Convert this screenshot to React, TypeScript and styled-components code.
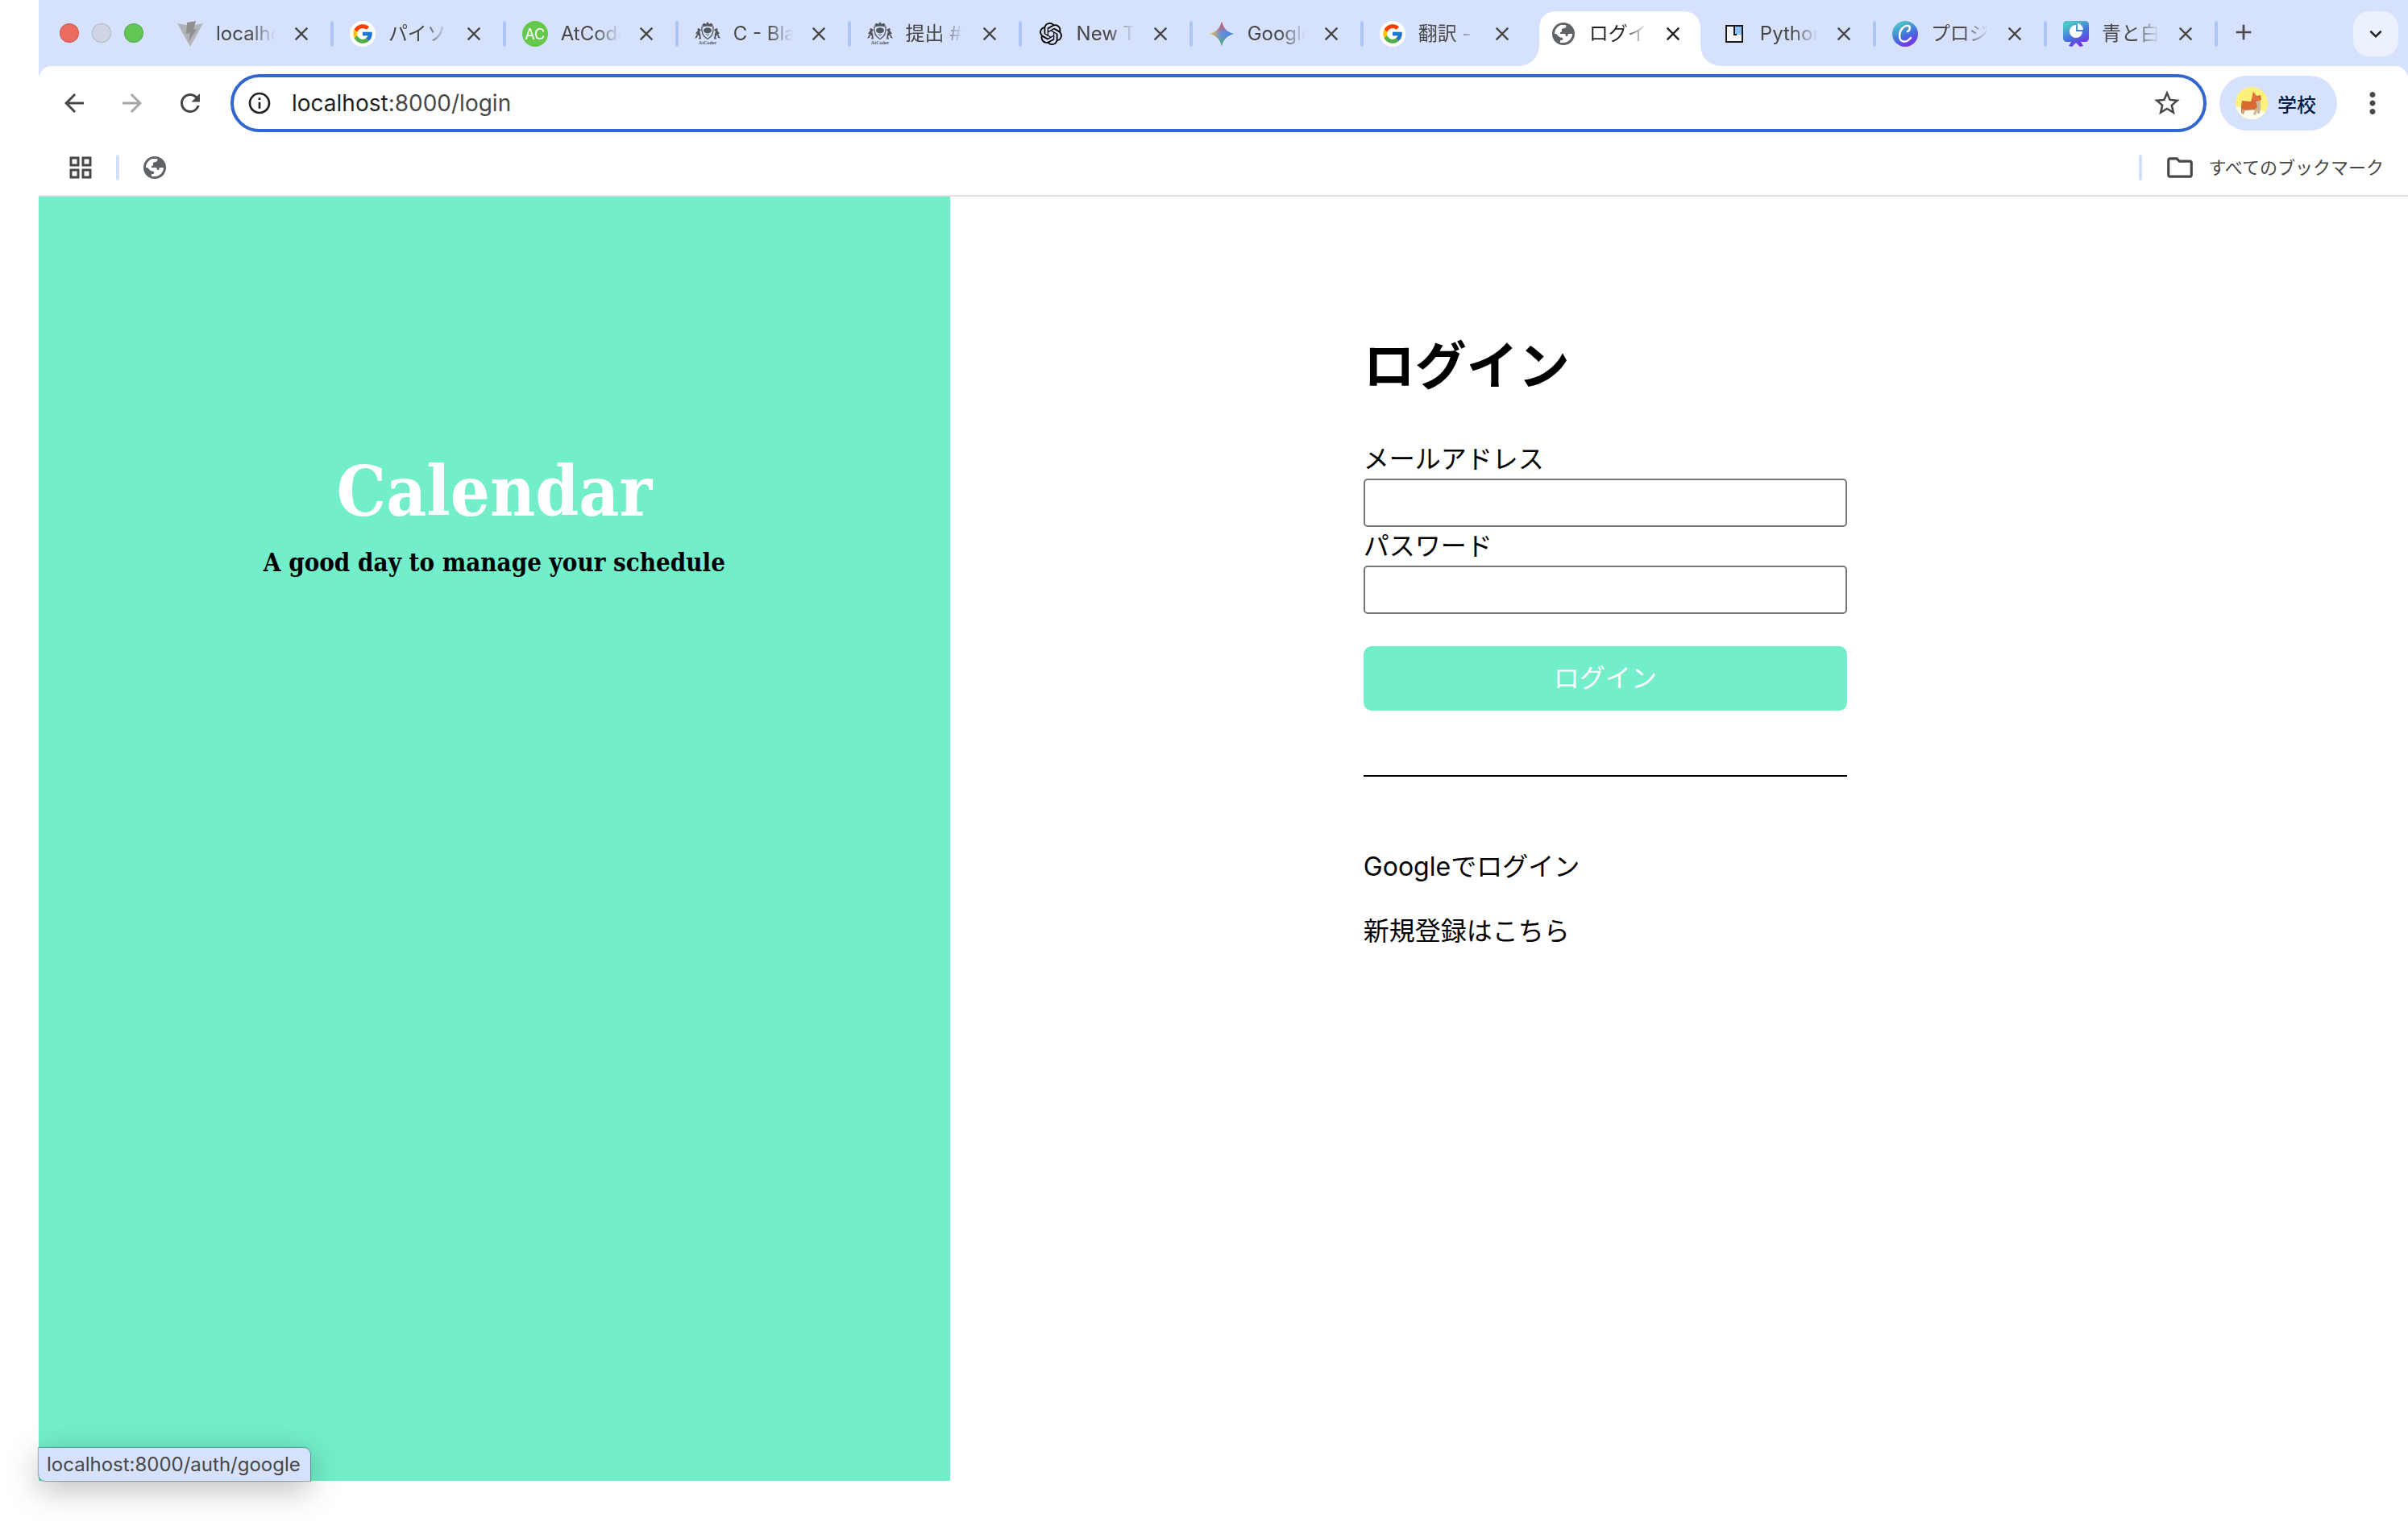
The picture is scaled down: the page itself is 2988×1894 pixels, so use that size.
import React from 'react';
import styled, { createGlobalStyle, css } from 'styled-components';
import { MdArrowBack, MdArrowForward, MdRefresh, MdClose, MdAdd, MdStarBorder, MdMoreVert, MdInfoOutline, MdOutlineFolder, MdKeyboardArrowDown } from 'react-icons/md';
import { FcGoogle } from 'react-icons/fc';
import { SiOpenai } from 'react-icons/si';

const ui = `Inter, "Noto Sans CJK JP", sans-serif`;
const mint = '#72eeca';

const GlobalStyle = createGlobalStyle`
  *, *::before, *::after { box-sizing: border-box; }
  body { margin: 0; background: #fff; color: #000; font-family: ${ui}; }
  button { border: 0; padding: 0; background: none; font: inherit; color: inherit; cursor: pointer; }
  svg { display: block; flex: none; }
`;

const Desktop = styled.div`
  display: flex;
  min-height: 100vh;
  padding: 0 0 56px 48px;
`;

const BrowserWindow = styled.div`
  position: relative;
  flex: 1;
  min-width: 0;
  display: flex;
  flex-direction: column;
  background: #d6e1fc;
`;

const TabStrip = styled.header`
  display: flex;
  height: 82px;
  padding: 0 12px 0 26px;
`;

const TrafficLights = styled.div`
  display: flex;
  align-items: center;
  gap: 16px;
  width: 126px;
`;

const Light = styled.button<{ $color: string }>`
  width: 24px;
  height: 24px;
  border-radius: 50%;
  background: ${(p) => p.$color};
  border: 1px solid rgba(0, 0, 0, 0.14);
`;

const TabList = styled.nav`
  flex: 1;
  min-width: 0;
  display: flex;
`;

const activeShape = css`
  &::before {
    content: '';
    position: absolute;
    z-index: -1;
    inset: 14px 6px 0 6px;
    border-radius: 20px 20px 0 0;
    background: #fff;
  }
  &::after {
    content: '';
    position: absolute;
    z-index: -1;
    left: -18px;
    right: -18px;
    bottom: 0;
    height: 24px;
    background:
      radial-gradient(circle at 0 0, transparent 23px, #fff 24px) left / 24px 24px no-repeat,
      radial-gradient(circle at 100% 0, transparent 23px, #fff 24px) right / 24px 24px no-repeat;
  }
`;

const Tab = styled.div<{ $active?: boolean; $grow: number }>`
  position: relative;
  z-index: 0;
  flex: ${(p) => p.$grow} 1 0;
  min-width: 0;
  display: flex;
  align-items: center;
  padding: 2px 0 0 20px;
  color: ${(p) => (p.$active ? '#1f1f1f' : '#474747')};
  ${(p) => p.$active && activeShape}
`;

const TabTitle = styled.span`
  flex: 1;
  min-width: 0;
  margin: 0 16px;
  overflow: hidden;
  white-space: nowrap;
  font-size: 24px;
  line-height: 32px;
  mask-image: linear-gradient(to right, #000 calc(100% - 32px), transparent);
`;

const TabClose = styled.button`
  display: grid;
  place-items: center;
  width: 32px;
  height: 32px;
  margin-right: 20px;
`;

const Separator = styled.i<{ $color?: string }>`
  flex: none;
  width: 4px;
  height: 32px;
  border-radius: 2px;
  background: ${(p) => p.$color ?? '#aec6f6'};
`;

const NewTab = styled.button`
  display: grid;
  place-items: center;
  width: 64px;
  height: 80px;
`;

const TabSearch = styled.button`
  display: grid;
  place-items: center;
  width: 56px;
  height: 56px;
  margin: 14px 0 0 auto;
  border-radius: 20px;
  background: #ebf2fd;
  color: #1f1f1f;
`;

const StripEnd = styled.div`
  display: flex;
  width: 224px;
  color: #474747;
`;

const Toolbar = styled.div`
  display: flex;
  align-items: center;
  height: 92px;
  padding: 0 20px;
  background: #fff;
  border-radius: 16px 16px 0 0;
  color: #474747;
`;

const NavButtons = styled.div`
  display: flex;
  gap: 24px;
  width: 218px;
`;

const NavButton = styled.button`
  display: grid;
  place-items: center;
  width: 48px;
  height: 48px;
  &:disabled { color: #a6a6a6; }
`;

const AddressBar = styled.div`
  flex: 1;
  display: flex;
  align-items: center;
  height: 72px;
  padding: 0 26px 0 16px;
  border: 4px solid #3166cf;
  border-radius: 36px;
`;

const Address = styled.div`
  flex: 1;
  margin-left: 24px;
  font-size: 28px;
  line-height: 40px;
  color: #474747;
  b { font-weight: 400; color: #1f1f1f; }
`;

const Profile = styled.button`
  display: flex;
  align-items: center;
  gap: 12px;
  height: 68px;
  width: 146px;
  margin: 0 20px 0 16px;
  padding-left: 20px;
  border-radius: 34px;
  background: #d6e1fc;
  color: #041e49;
  font-size: 24px;
  font-weight: 500;
`;

const Bookmarks = styled.div`
  display: flex;
  align-items: center;
  height: 70px;
  padding: 0 30px 0 38px;
  border-bottom: 2px solid #e2e2e2;
  background: #fff;
  color: #474747;
`;

const BookmarkButton = styled.button`
  display: flex;
  align-items: center;
  gap: 16px;
  height: 40px;
  margin: 0 30px;
  font-size: 22px;
  line-height: 32px;
  &:first-child { margin-left: 0; }
  &:last-child { margin: 0 0 0 28px; }
`;

const Spacer = styled.div`
  flex: 1;
`;

const Page = styled.main`
  flex: 1;
  display: grid;
  grid-template-columns: 5fr 8fr;
  background: #fff;
`;

const Hero = styled.section`
  padding-top: 308px;
  text-align: center;
  background: ${mint};
  font-family: "DejaVu Serif Condensed", "DejaVu Serif", serif;
  font-weight: 700;
`;

const Brand = styled.h1`
  margin: 0;
  color: #fff;
  font-size: 86px;
  line-height: 116px;
`;

const Tagline = styled.p`
  margin: 10px 0 0;
  font-size: 31px;
  line-height: 40px;
`;

const LoginSide = styled.section`
  display: grid;
  grid-template-columns: 513fr 600px 696fr;
  align-content: start;
`;

const LoginPanel = styled.div`
  grid-column: 2;
  padding-top: 162px;
  font-size: 32px;
  line-height: 48px;
`;

const Title = styled.h2`
  margin: 0 0 44px;
  font-size: 64px;
  line-height: 96px;
  font-weight: 700;
`;

const Form = styled.form`
  display: flex;
  flex-direction: column;
`;

const Field = styled.input`
  width: 100%;
  height: 60px;
  padding: 2px 8px;
  border: 2px solid #767676;
  border-radius: 5px;
  background: #fff;
  font: inherit;
`;

const Submit = styled.button`
  height: 80px;
  margin-top: 40px;
  border-radius: 10px;
  background: ${mint};
  color: #fff;
`;

const Rule = styled.hr`
  margin: 80px 0 88px;
  border: 0;
  border-top: 2px solid #000;
`;

const AltLink = styled.a`
  display: block;
  margin-top: 32px;
  color: #000;
  text-decoration: none;
`;

const StatusBubble = styled.div`
  position: absolute;
  left: 0;
  bottom: 0;
  padding: 1px 12px 0 10px;
  border-radius: 0 8px 0 8px;
  background: #d6e1fc;
  color: #474747;
  font-size: 24px;
  line-height: 40px;
  box-shadow: 0 0 1px 1px rgba(0, 0, 0, 0.3), 0 10px 40px rgba(0, 0, 0, 0.28);
`;

const GoogleBadge = styled.span`
  display: grid;
  place-items: center;
  flex: none;
  width: 32px;
  height: 32px;
  border-radius: 50%;
  background: #fff;
`;

const AcBadge = styled(GoogleBadge)`
  background: #66c84a;
  color: #fff;
  font-size: 18px;
`;

const Vite = () => (
  <svg width="32" height="32" viewBox="0 0 32 32">
    <path d="M0 3 16 6 32 3 16 32Z" fill="#b3b4b8" />
    <path d="M12 2 23 0 20 11 24 10 14 26 16 15 11 16Z" fill="#8f8f91" />
  </svg>
);

const Google = () => (
  <GoogleBadge>
    <FcGoogle size={28} />
  </GoogleBadge>
);

const AtCoder = () => (
  <svg width="32" height="32" viewBox="0 0 32 32" fill="#55585f">
    <g transform="translate(0 1) scale(1 0.9)">
      <path d="M9 5 11 2 14 3 16 0 18 3 21 2 23 5 20 6H12Z" />
      <path d="M9 7Q16 4 23 7C24 16 21 21 16 24 11 21 8 16 9 7Z" fill="#d6e1fc" stroke="#55585f" strokeWidth="1.3" />
      <ellipse cx="16" cy="12" rx="5" ry="4" />
      <path d="M14 17 16 19 18 17" fill="none" stroke="#55585f" />
      <path d="M5 9 3 10 4 12 1 16 3 17 0 23 3 22 4 18 6 20 5 24H8L7 16 6 14 8 11Z" />
      <path d="M27 9 29 10 28 12 31 16 29 17 32 23 29 22 28 18 26 20 27 24H24L25 16 26 14 24 11Z" />
    </g>
    <text x="16" y="29" textAnchor="middle" fontFamily="Liberation Serif, serif" fontSize="6" fontWeight="700">AtCoder</text>
  </svg>
);

const Gemini = () => (
  <svg width="32" height="32" viewBox="0 0 32 32">
    <defs>
      <linearGradient id="gem-x" x1="0" x2="1">
        <stop offset="0" stopColor="#f4c534" />
        <stop offset="0.45" stopColor="#6f8fd8" />
        <stop offset="1" stopColor="#3b7df0" />
      </linearGradient>
      <linearGradient id="gem-t" x2="0" y2="1">
        <stop offset="0" stopColor="#ee4b3d" />
        <stop offset="0.45" stopColor="#ee4b3d" stopOpacity="0" />
      </linearGradient>
      <linearGradient id="gem-b" x2="0" y1="1" y2="0">
        <stop offset="0" stopColor="#3fb553" />
        <stop offset="0.45" stopColor="#3fb553" stopOpacity="0" />
      </linearGradient>
    </defs>
    {['gem-x', 'gem-t', 'gem-b'].map((id) => (
      <path key={id} fill={`url(#${id})`} d="M16 1C18 9 23 14 31 16 23 18 18 23 16 31 14 23 9 18 1 16 9 14 14 9 16 1Z" />
    ))}
  </svg>
);

const PythonBook = () => (
  <svg width="32" height="32" viewBox="0 0 32 32">
    <rect x="6" y="6" width="20" height="20" fill="#f6f6f6" />
    <path d="M17 7h8v10h-8z" fill="#8cc4fb" />
    <path d="M16 6v11h3M6 6h20v20H6z" fill="none" stroke="#17181c" strokeWidth="2" />
  </svg>
);

const CanvaDefs = ({ id }: { id: string }) => (
  <defs>
    <linearGradient id={id} x1="0.2" y1="0" x2="0.7" y2="1">
      <stop offset="0.1" stopColor="#4cc5c8" />
      <stop offset="0.55" stopColor="#4474dc" />
      <stop offset="1" stopColor="#7d2ae7" />
    </linearGradient>
  </defs>
);

const Canva = () => (
  <svg width="32" height="32" viewBox="0 0 32 32">
    <CanvaDefs id="canva-round" />
    <circle cx="16" cy="16" r="16" fill="url(#canva-round)" />
    <path d="M19 13c3-1 4-6 1-7C14 5 9 12 9 18c0 9 8 10 14 3" fill="none" stroke="#fff" strokeWidth="2.4" strokeLinecap="round" />
  </svg>
);

const CanvaSlides = () => (
  <svg width="32" height="32" viewBox="0 0 32 32">
    <CanvaDefs id="canva-board" />
    <path d="M5 0H27Q32 0 32 5V21Q32 26 27 26H22L25 31 21 32 16 27 11 32 7 31 10 26H5Q0 26 0 21V5Q0 0 5 0Z" fill="url(#canva-board)" />
    <path d="M16 5A8 8 0 1 0 24 13H16Z" fill="#fff" />
    <path d="M18 3A8 8 0 0 1 25 11H18Z" fill="#fff" />
  </svg>
);

const Avatar = () => (
  <svg width="40" height="40" viewBox="0 0 40 40">
    <clipPath id="avatar-clip">
      <circle cx="20" cy="20" r="20" />
    </clipPath>
    <g clipPath="url(#avatar-clip)">
      <rect width="40" height="40" fill="#fdf17c" />
      <path d="M0 24 40 31V40H0Z" fill="#fffdee" />
      <path d="M8 17 19 18 20 15 22 6 26 11 31 10 32 16 27 18 27 28 10 29 10 34 7 32 7 24Z" fill="#d8682f" />
      <path d="M22 6 26 11 32 16 20 16Z" fill="#dd7440" />
      <path d="M25 18 31 17 31 27 30 33 27 33 27 29 25 35 22 34 24 28 27 24Z" fill="#cbb896" />
      <path d="M8 27 12 28 10 34 7 32Z" fill="#c9a27c" />
    </g>
  </svg>
);

const AppsGrid = () => (
  <svg width="28" height="28" viewBox="0 0 28 28" fill="none" stroke="currentColor" strokeWidth="3">
    <path d="M2 2h9v9h-9zM17 2h9v9h-9zM2 17h9v9h-9zM17 17h9v9h-9z" />
  </svg>
);

const Globe = () => (
  <svg width="28" height="28" viewBox="0 0 28 28">
    <circle cx="14" cy="14" r="14" fill="#5f6368" />
    <path
      d="M3 14C3 9 6 5 11 3L17 3C18 5 17 7 14 7L12 8V11C12 12 10 12 10 12V14H15C17 14 17 16 17 17H19L20 14H25C25 20 20 25 14 25L10 25V22H12C14 22 13 19 13 19L9 18 5 14Z"
      fill="#fff"
    />
  </svg>
);

const IconSlot = styled.span`
  display: grid;
  place-items: center;
  flex: none;
  width: 32px;
  height: 32px;
`;

type TabItem = { title: string; icon: React.ReactNode; grow: number; active?: boolean; bare?: boolean };

const tabs: TabItem[] = [
  { title: 'localhost', icon: <Vite />, grow: 107 },
  { title: 'パイソン', icon: <Google />, grow: 107 },
  { title: 'AtCoder', icon: <AcBadge>AC</AcBadge>, grow: 107 },
  { title: 'C - Black', icon: <AtCoder />, grow: 107 },
  { title: '提出 #6', icon: <AtCoder />, grow: 106 },
  { title: 'New Tab', icon: <SiOpenai size={28} color="#000" />, grow: 106 },
  { title: 'Google', icon: <Gemini />, grow: 106 },
  { title: '翻訳 - G', icon: <Google />, grow: 106, bare: true },
  { title: 'ログイン', icon: <Globe />, grow: 106, active: true, bare: true },
  { title: 'Python', icon: <PythonBook />, grow: 106 },
  { title: 'プロジェ', icon: <Canva />, grow: 106 },
  { title: '青と白の', icon: <CanvaSlides />, grow: 106 },
];

export default function App() {
  return (
    <Desktop>
      <GlobalStyle />
      <BrowserWindow>
        <TabStrip>
          <TrafficLights>
            <Light $color="#ed6a5e" aria-label="Close window" />
            <Light $color="#ced5e3" aria-label="Minimize" />
            <Light $color="#62c655" aria-label="Zoom" />
          </TrafficLights>
          <TabList>
            {tabs.map((t) => (
              <Tab key={t.title} $active={t.active} $grow={t.grow}>
                <IconSlot>{t.icon}</IconSlot>
                <TabTitle>{t.title}</TabTitle>
                <TabClose aria-label="Close tab">
                  <MdClose size={28} />
                </TabClose>
                <Separator $color={t.bare ? 'transparent' : undefined} />
              </Tab>
            ))}
          </TabList>
          <StripEnd>
            <NewTab aria-label="New tab">
              <MdAdd size={32} />
            </NewTab>
            <TabSearch aria-label="Search tabs">
              <MdKeyboardArrowDown size={30} />
            </TabSearch>
          </StripEnd>
        </TabStrip>

        <Toolbar>
          <NavButtons>
            <NavButton aria-label="Back">
              <MdArrowBack size={36} />
            </NavButton>
            <NavButton aria-label="Forward" disabled>
              <MdArrowForward size={36} />
            </NavButton>
            <NavButton aria-label="Reload">
              <MdRefresh size={36} />
            </NavButton>
          </NavButtons>
          <AddressBar>
            <MdInfoOutline size={32} color="#1f1f1f" />
            <Address>
              <b>localhost</b>:8000/login
            </Address>
            <MdStarBorder size={38} />
          </AddressBar>
          <Profile>
            <Avatar />
            学校
          </Profile>
          <NavButton aria-label="Menu">
            <MdMoreVert size={42} />
          </NavButton>
        </Toolbar>

        <Bookmarks>
          <BookmarkButton aria-label="Apps">
            <AppsGrid />
          </BookmarkButton>
          <Separator $color="#d3e0fb" />
          <BookmarkButton aria-label="Bookmark">
            <Globe />
          </BookmarkButton>
          <Spacer />
          <Separator $color="#d3e0fb" />
          <BookmarkButton>
            <MdOutlineFolder size={38} />
            すべてのブックマーク
          </BookmarkButton>
        </Bookmarks>

        <Page>
          <Hero>
            <Brand>Calendar</Brand>
            <Tagline>A good day to manage your schedule</Tagline>
          </Hero>
          <LoginSide>
            <LoginPanel>
              <Title>ログイン</Title>
              <Form onSubmit={(e) => e.preventDefault()}>
                <label htmlFor="email">メールアドレス</label>
                <Field id="email" type="email" />
                <label htmlFor="password">パスワード</label>
                <Field id="password" type="password" />
                <Submit type="submit">ログイン</Submit>
              </Form>
              <Rule />
              <AltLink href="/auth/google">Googleでログイン</AltLink>
              <AltLink href="/register">新規登録はこちら</AltLink>
            </LoginPanel>
          </LoginSide>
        </Page>
        <StatusBubble>localhost:8000/auth/google</StatusBubble>
      </BrowserWindow>
    </Desktop>
  );
}
